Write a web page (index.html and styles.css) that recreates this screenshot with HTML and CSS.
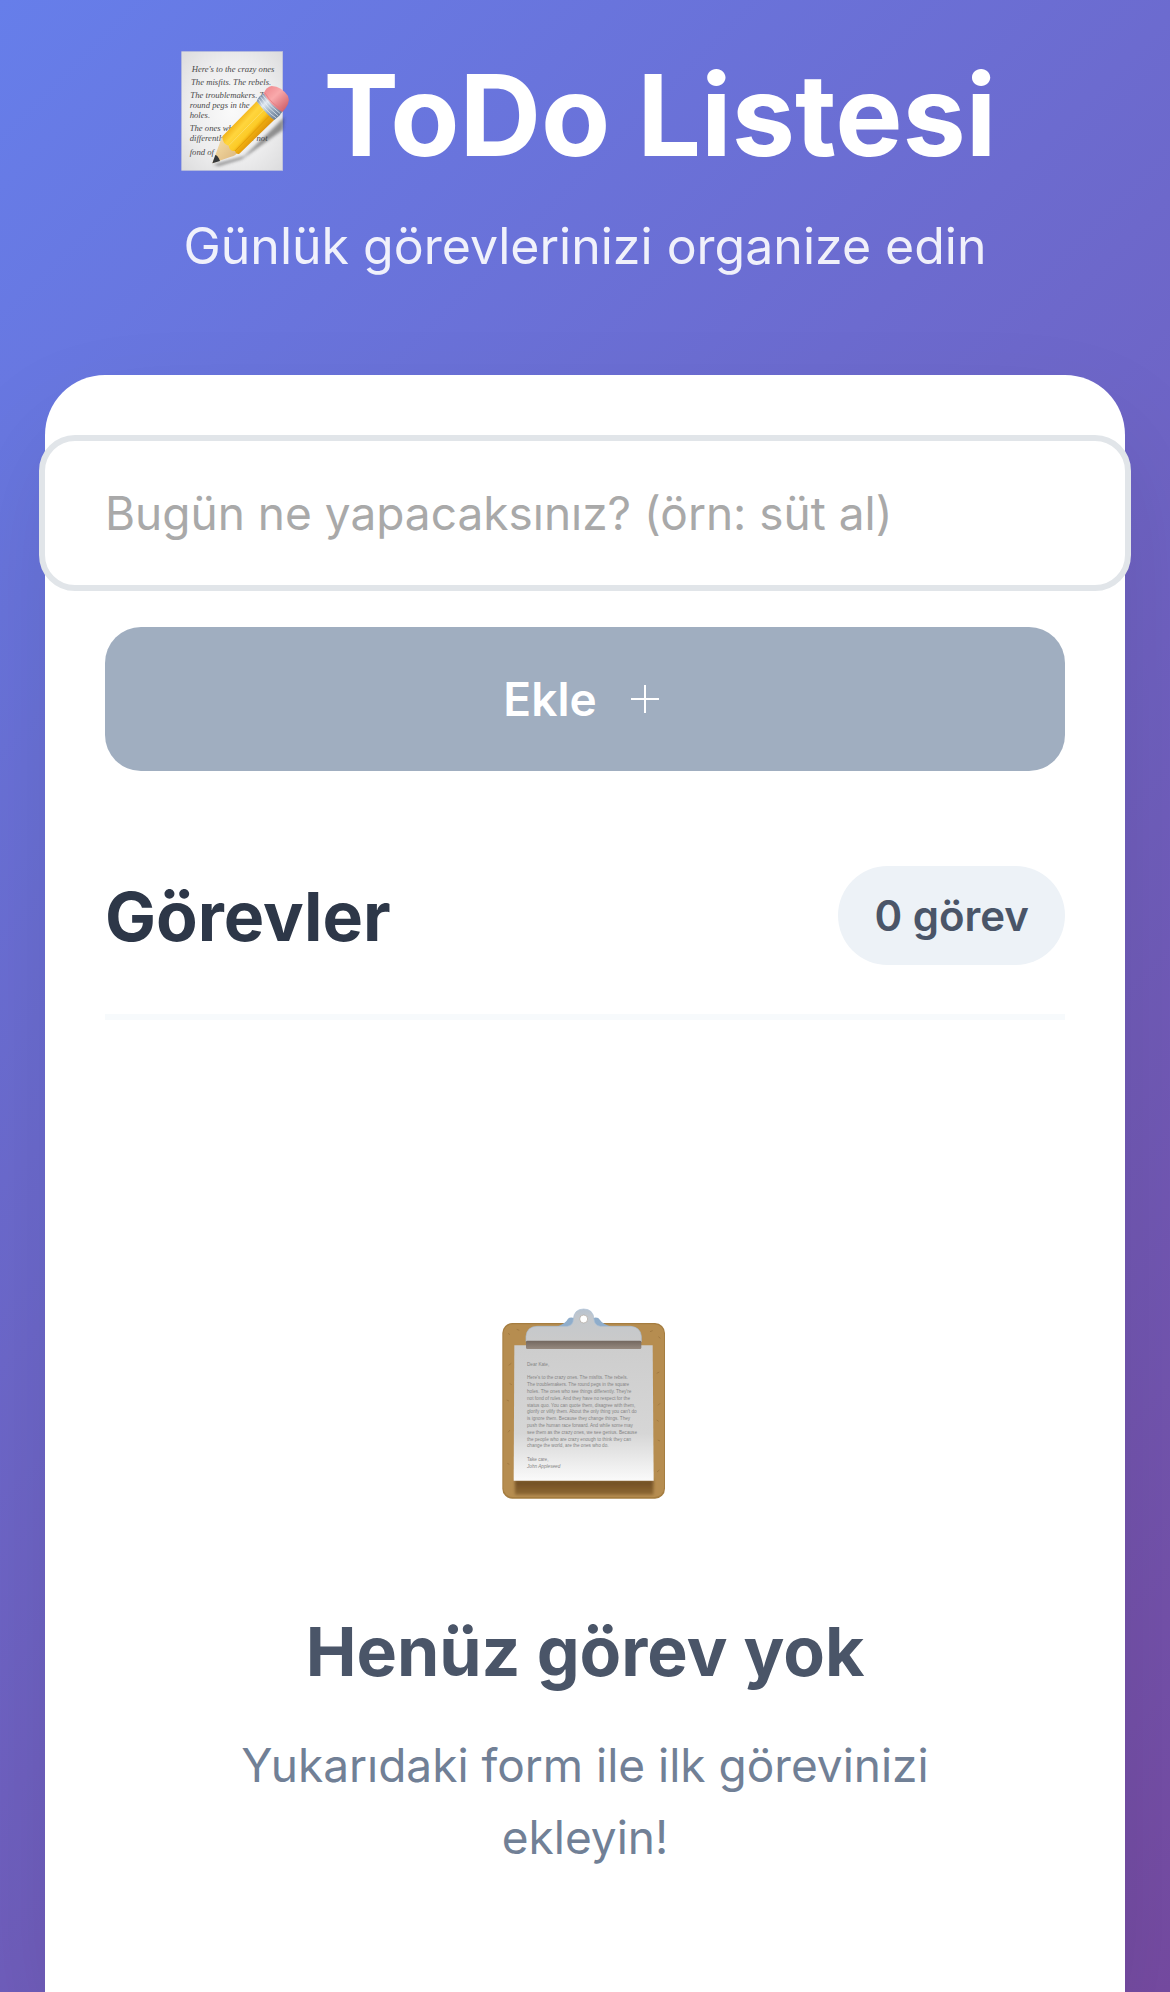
FILE: index.html
```html
<!DOCTYPE html>
<html lang="tr">
<head>
<meta charset="utf-8">
<meta name="viewport" content="width=device-width, initial-scale=1">
<title>ToDo Listesi</title>
<link rel="stylesheet" href="styles.css">
</head>
<body>
<div class="app">
  <header class="header">
    <h1 class="title">
      <svg class="title-icon" viewBox="51 60 360 363" aria-hidden="true">
        <defs>
          <radialGradient id="paper" cx=".5" cy=".5" r=".7"><stop offset="0" stop-color="#fafafa"/><stop offset=".6" stop-color="#ededee"/><stop offset="1" stop-color="#dcdcdd"/></radialGradient>
          <linearGradient id="wood" x1="0" y1="0" x2="1" y2="1"><stop offset="0" stop-color="#f9e3ac"/><stop offset="1" stop-color="#d9b279"/></linearGradient>
          <linearGradient id="body" gradientUnits="userSpaceOnUse" x1="245" y1="268" x2="305" y2="322"><stop offset="0" stop-color="#f3b71c"/><stop offset=".25" stop-color="#ffd53d"/><stop offset=".6" stop-color="#fccb27"/><stop offset=".72" stop-color="#efae10"/><stop offset="1" stop-color="#dd930b"/></linearGradient>
          <linearGradient id="metal" gradientUnits="userSpaceOnUse" x1="310" y1="200" x2="368" y2="258"><stop offset="0" stop-color="#7f93ab"/><stop offset=".3" stop-color="#dfe8f1"/><stop offset=".6" stop-color="#9db0c3"/><stop offset="1" stop-color="#667a90"/></linearGradient>
          <linearGradient id="rubber" gradientUnits="userSpaceOnUse" x1="330" y1="175" x2="388" y2="236"><stop offset="0" stop-color="#f08d92"/><stop offset=".4" stop-color="#f9a9ab"/><stop offset="1" stop-color="#d0616b"/></linearGradient>
          <filter id="soft" x="-20%" y="-20%" width="140%" height="140%"><feGaussianBlur stdDeviation="5"/></filter>
        </defs>
        <rect x="74" y="65" width="303" height="356" fill="url(#paper)" stroke="#c3c6da" stroke-width="2"/>
        <g class="handwriting">
          <text x="104" y="125">Here's to the crazy ones</text>
          <text x="102" y="165">The misfits. The rebels.</text>
          <text x="100" y="203">The troublemakers. The</text>
          <text x="98" y="234">round pegs in the</text>
          <text x="98" y="264">holes.</text>
          <text x="98" y="303">The ones who see</text>
          <text x="98" y="334">differently. They're not</text>
          <text x="98" y="376">fond of</text>
        </g>
        <path d="M168 404 L262 378 L382 262 L377 300 L254 388 L186 408 Z" fill="#333" opacity=".5" filter="url(#soft)"/>
        <path d="M166 400 L188 340 Q193 322 201 320 L243 366 Q236 378 220 381 Z" fill="url(#wood)"/>
        <path d="M166 400 L175 375 Q183 377 189 393 Z" fill="#35383b"/>
        <path d="M196 319 L299 214 L352 269 L247 371 Q237 375 234 363 Q218 365 215 347 Q197 344 196 319 Z" fill="url(#body)"/>
        <path d="M215 347 L322 238" stroke="#fbdc65" stroke-width="3" fill="none"/>
        <path d="M234 363 L339 256" stroke="#d99508" stroke-width="2" fill="none"/>
        <path d="M299 214 Q305 198 321 190 L376 245 Q367 260 352 270 Q334 260 299 214 Z" fill="url(#metal)"/>
        <path d="M305 207 Q326 244 358 264 M310 200 Q334 236 364 258 M316 194 Q340 231 370 251" stroke="#f1f5f9" stroke-width="2" fill="none"/>
        <path d="M320 190 Q328 170 344 168 Q374 170 393 198 Q402 219 376 246 Q341 228 320 190 Z" fill="url(#rubber)"/>
        <path d="M324 189 Q343 222 377 239" stroke="#dd747b" stroke-width="3" fill="none" opacity=".6"/>
      </svg>
      <span>ToDo Listesi</span>
    </h1>
    <p class="subtitle">Günlük görevlerinizi organize edin</p>
  </header>

  <main class="card">
    <form class="todo-form">
      <input class="todo-input" type="text" aria-label="Yeni görev" placeholder="Bugün ne yapacaksınız? (örn: süt al)">
      <button class="add-button" type="submit" disabled>
        <span>Ekle</span>
        <svg class="add-icon" viewBox="0 0 28 28" aria-hidden="true"><path d="M14 0V28M0 14H28" stroke="#fff" stroke-width="2"/></svg>
      </button>
    </form>

    <section class="tasks">
      <div class="tasks-head">
        <h2 class="tasks-title">Görevler</h2>
        <span class="count">0 görev</span>
      </div>
      <div class="empty">
        <svg class="empty-icon" viewBox="60 54 510 576" aria-hidden="true">
          <defs>
            <linearGradient id="sheet" x1="0" y1="0" x2="0" y2="1"><stop offset="0" stop-color="#cdcdcd"/><stop offset=".65" stop-color="#d6d6d6"/><stop offset="1" stop-color="#fafafa"/></linearGradient>
            <linearGradient id="clip" x1="0" y1="0" x2="0" y2="1"><stop offset="0" stop-color="#b7c3d0"/><stop offset=".3" stop-color="#c4c8cc"/><stop offset="1" stop-color="#cacaca"/></linearGradient>
            <linearGradient id="lip" x1="0" y1="0" x2="0" y2="1"><stop offset="0" stop-color="#73675f"/><stop offset="1" stop-color="#96897f"/></linearGradient>
            <linearGradient id="shade" x1="0" y1="0" x2="0" y2="1"><stop offset="0" stop-color="#6f4d24"/><stop offset="1" stop-color="#8d6732"/></linearGradient>
            <filter id="blur" x="-10%" y="-40%" width="120%" height="180%"><feGaussianBlur stdDeviation="4"/></filter>
          </defs>
          <rect x="67" y="99" width="488" height="527" rx="30" fill="#a57d40"/>
          <rect x="70" y="103" width="482" height="518" rx="28" fill="#b68d50"/>
          <path d="M84 130l6 4M94 220l-8 6M80 330l7 3M90 420l-6 7M82 520l6 3M535 140l6 5M530 250l8-4M540 340l-6 6M533 450l7 3M538 540l-7 6M110 118l8 3M510 125l8-3M90 280l5 5M530 390l6 4" stroke="#a27a42" stroke-width="3"/>
          <path d="M105 570H520V614H105Z" fill="url(#shade)" filter="url(#blur)"/>
          <path d="M103 166H518L521 572H101Z" fill="url(#sheet)"/>
          <path d="M230 110 Q258 100 264 86 Q270 80 283 84 L340 84 Q354 80 360 90 Q368 102 394 110 Z" fill="#8fadcb"/>
          <path d="M138 155 V139 Q141 109 172 109 H262 Q280 106 280 88 Q282 57 311 57 Q340 57 342 88 Q343 106 361 109 H453 Q482 112 484 139 V155 Z" fill="url(#clip)" stroke="#a9bed5" stroke-width="2"/>
          <circle cx="311" cy="87" r="12" fill="#fff" stroke="#aaa39b" stroke-width="2"/>
          <rect x="138" y="152" width="346" height="25" rx="4" fill="url(#lip)"/>
          <g class="letter">
            <text x="141" y="227">Dear Kate,</text>
            <text x="141" y="268">Here's to the crazy ones. The misfits. The rebels.</text>
            <text x="141" y="289">The troublemakers. The round pegs in the square</text>
            <text x="141" y="309">holes. The ones who see things differently. They're</text>
            <text x="141" y="329">not fond of rules. And they have no respect for the</text>
            <text x="141" y="350">status quo. You can quote them, disagree with them,</text>
            <text x="141" y="370">glorify or vilify them. About the only thing you can't do</text>
            <text x="141" y="391">is ignore them. Because they change things. They</text>
            <text x="141" y="411">push the human race forward. And while some may</text>
            <text x="141" y="431">see them as the crazy ones, we see genius. Because</text>
            <text x="141" y="452">the people who are crazy enough to think they can</text>
            <text x="141" y="472">change the world, are the ones who do.</text>
            <text x="141" y="513">Take care,</text>
            <text class="signature" x="141" y="534">John Appleseed</text>
          </g>
        </svg>
        <h3 class="empty-title">Henüz görev yok</h3>
        <p class="empty-text">Yukarıdaki form ile ilk görevinizi ekleyin!</p>
      </div>
    </section>
  </main>
</div>
</body>
</html>
```
FILE: styles.css
```css
* {
  box-sizing: border-box;
  margin: 0;
  padding: 0;
}

body {
  font-family: Inter, "Liberation Sans", sans-serif;
  background: linear-gradient(135deg, #667eea 0%, #764ba2 100%);
  overflow-x: hidden;
}

.app {
  display: flex;
  flex-direction: column;
  min-height: 100vh;
  padding: 0 45px;
}

.header {
  padding: 50px 0 93px;
  text-align: center;
  color: #fff;
}

.title {
  display: flex;
  align-items: flex-start;
  justify-content: center;
  gap: 30px;
  margin-bottom: 30px;
  font-size: 113px;
  font-weight: 700;
  line-height: 130px;
}

.title-icon {
  width: 120px;
  height: 121px;
}

.handwriting {
  font: italic 26px "Liberation Serif", serif;
  fill: #4a4a4a;
}

.subtitle {
  font-size: 50px;
  line-height: 72px;
  opacity: .9;
}

.card {
  flex: 1;
  padding: 60px;
  background: #fff;
  border-radius: 60px 60px 0 0;
  box-shadow: 0 60px 120px rgba(0, 0, 0, .1);
}

.todo-form {
  display: flex;
  flex-direction: column;
  gap: 36px;
  margin-bottom: 95px;
}

.todo-input {
  height: 156px;
  margin: 0 -66px;
  padding: 0 60px;
  border: 6px solid #e1e5e9;
  border-radius: 36px;
  background: #fff;
  font: 400 46px Inter, "Liberation Sans", sans-serif;
  color: #2d3748;
}

.todo-input::placeholder {
  color: #a9a9a9;
  opacity: 1;
}

.add-button {
  display: flex;
  align-items: center;
  justify-content: center;
  gap: 26px;
  height: 144px;
  border: 0;
  border-radius: 36px;
  background: #a0aec0;
  font: 600 46px Inter, "Liberation Sans", sans-serif;
  color: #fff;
}

.add-icon {
  width: 28px;
  height: 28px;
  margin: 0 8px;
}

.tasks-head {
  display: flex;
  align-items: center;
  justify-content: space-between;
  padding-bottom: 49px;
  border-bottom: 6px solid #f7fafc;
}

.tasks-title {
  font-size: 68px;
  font-weight: 700;
  line-height: 84px;
  color: #2d3748;
}

.count {
  padding: 24px 36px;
  border-radius: 60px;
  background: #edf2f7;
  font-size: 42px;
  font-weight: 600;
  line-height: 51px;
  color: #4a5568;
}

.empty {
  display: flex;
  flex-direction: column;
  align-items: center;
  padding: 288px 60px 60px;
  text-align: center;
}

.empty-icon {
  width: 170px;
  height: 192px;
  margin-bottom: 109px;
}

.letter {
  font: 14px "Liberation Sans", sans-serif;
  fill: #858585;
}

.signature {
  font-style: italic;
}

.empty-title {
  margin-bottom: 36px;
  font-size: 68px;
  font-weight: 700;
  line-height: 84px;
  color: #4a5568;
}

.empty-text {
  max-width: 720px;
  font-size: 46px;
  line-height: 72px;
  color: #718096;
}
```
